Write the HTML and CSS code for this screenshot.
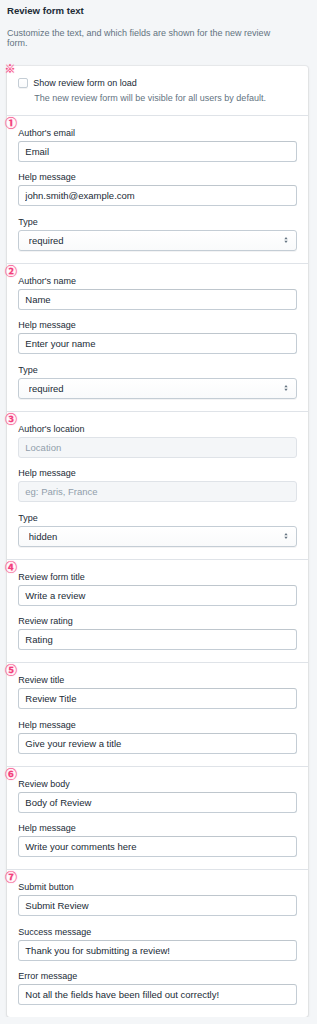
FILE: index.html
```html
<!DOCTYPE html>
<html>
  <head>
    <meta charset="utf-8" />
    <title>Review form text</title>
    <link rel="stylesheet" href="styles.css">
  </head>
  <body>
    <div class="page">
      <h2 class="page-title">Review form text</h2>
      <p class="page-desc">
        Customize the text, and which fields are shown for the new review
        form.
      </p>

      <div class="card">
        <div class="section section-check">
          <span class="mark mark-note">※</span>
          <label class="check-row">
            <span class="checkbox"></span>
            <span>Show review form on load</span>
          </label>
          <p class="check-help">
            The new review form will be visible for all users by default.
          </p>
        </div>

        <div class="section">
          <span class="mark">①</span>
          <div class="field">
            <label class="field-label">Author's email</label>
            <input type="text" class="text-field" value="Email" />
          </div>
          <div class="field">
            <label class="field-label">Help message</label>
            <input type="text" class="text-field" value="john.smith@example.com" />
          </div>
          <div class="field">
            <label class="field-label">Type</label>
            <div class="select">
              <select class="select-input">
                <option selected>required</option>
                <option>optional</option>
                <option>hidden</option>
              </select>
              <svg class="select-arrow" viewBox="0 0 6 10">
                <path d="M3 0.5 L5.5 3.8 H0.5 Z M3 9.5 L0.5 6.2 H5.5 Z" />
              </svg>
            </div>
          </div>
        </div>

        <div class="section">
          <span class="mark">②</span>
          <div class="field">
            <label class="field-label">Author's name</label>
            <input type="text" class="text-field" value="Name" />
          </div>
          <div class="field">
            <label class="field-label">Help message</label>
            <input type="text" class="text-field" value="Enter your name" />
          </div>
          <div class="field">
            <label class="field-label">Type</label>
            <div class="select">
              <select class="select-input">
                <option selected>required</option>
                <option>optional</option>
                <option>hidden</option>
              </select>
              <svg class="select-arrow" viewBox="0 0 6 10">
                <path d="M3 0.5 L5.5 3.8 H0.5 Z M3 9.5 L0.5 6.2 H5.5 Z" />
              </svg>
            </div>
          </div>
        </div>

        <div class="section">
          <span class="mark">③</span>
          <div class="field">
            <label class="field-label">Author's location</label>
            <input type="text" class="text-field" placeholder="Location" disabled />
          </div>
          <div class="field">
            <label class="field-label">Help message</label>
            <input type="text" class="text-field" placeholder="eg: Paris, France" disabled />
          </div>
          <div class="field">
            <label class="field-label">Type</label>
            <div class="select">
              <select class="select-input">
                <option>required</option>
                <option>optional</option>
                <option selected>hidden</option>
              </select>
              <svg class="select-arrow" viewBox="0 0 6 10">
                <path d="M3 0.5 L5.5 3.8 H0.5 Z M3 9.5 L0.5 6.2 H5.5 Z" />
              </svg>
            </div>
          </div>
        </div>

        <div class="section">
          <span class="mark">④</span>
          <div class="field">
            <label class="field-label">Review form title</label>
            <input type="text" class="text-field" value="Write a review" />
          </div>
          <div class="field">
            <label class="field-label">Review rating</label>
            <input type="text" class="text-field" value="Rating" />
          </div>
        </div>

        <div class="section">
          <span class="mark">⑤</span>
          <div class="field">
            <label class="field-label">Review title</label>
            <input type="text" class="text-field" value="Review Title" />
          </div>
          <div class="field">
            <label class="field-label">Help message</label>
            <input type="text" class="text-field" value="Give your review a title" />
          </div>
        </div>

        <div class="section">
          <span class="mark">⑥</span>
          <div class="field">
            <label class="field-label">Review body</label>
            <input type="text" class="text-field" value="Body of Review" />
          </div>
          <div class="field">
            <label class="field-label">Help message</label>
            <input type="text" class="text-field" value="Write your comments here" />
          </div>
        </div>

        <div class="section">
          <span class="mark">⑦</span>
          <div class="field">
            <label class="field-label">Submit button</label>
            <input type="text" class="text-field" value="Submit Review" />
          </div>
          <div class="field">
            <label class="field-label">Success message</label>
            <input type="text" class="text-field" value="Thank you for submitting a review!" />
          </div>
          <div class="field">
            <label class="field-label">Error message</label>
            <input type="text" class="text-field" value="Not all the fields have been filled out correctly!" />
          </div>
        </div>
      </div>
    </div>
  </body>
</html>
```

FILE: styles.css
```css
* {
  margin: 0;
  padding: 0;
  box-sizing: border-box;
}
body {
  font-family: "Liberation Sans", Arial, sans-serif;
  background: #f4f6f8;
  color: #212b36;
}
.page {
  padding: 4px 9px 0 7px;
}
.page-title {
  font-size: 9.6px;
  line-height: 13px;
  font-weight: bold;
  margin-bottom: 10.5px;
}
.page-desc {
  font-size: 9px;
  line-height: 10.7px;
  color: #637381;
  max-width: 280px;
  margin-bottom: 17px;
}
.card {
  background: white;
  border-radius: 3px;
  box-shadow: 0 0 0 1px rgba(63, 63, 68, 0.05), 0 1px 3px 0 rgba(63, 63, 68, 0.15);
}
.section {
  position: relative;
  border-top: 1px solid #dfe3e8;
  padding: 10px 11.3px 12px;
}
.section-check {
  border-top: 0;
  padding-bottom: 10px;
}
/* annotation markers */
.mark {
  position: absolute;
  left: -2px;
  top: 1px;
  font-family: "Noto Sans CJK JP", sans-serif;
  font-size: 12px;
  line-height: 12px;
  font-weight: bold;
  color: #f23d7c;
  text-shadow: 0 0 1px #ff8fb5, 0 0 2px #ffd3e2;
}
.mark-note {
  top: -3.5px;
  left: -2.5px;
  font-size: 11px;
}
.check-row {
  display: flex;
  align-items: center;
  gap: 5px;
  font-size: 9px;
  line-height: 14px;
}
.checkbox {
  width: 10px;
  height: 10px;
  border: 1px solid #c4cdd5;
  border-radius: 2px;
  background: linear-gradient(#fff, #f9fafb);
  box-shadow: 0 1px 0 rgba(22, 29, 37, 0.05);
}
.check-help {
  font-size: 9px;
  line-height: 14px;
  color: #637381;
  margin-top: 1px;
  padding-left: 16px;
}
.field + .field {
  margin-top: 8.5px;
}
.field-label {
  display: block;
  font-size: 9px;
  line-height: 14px;
  margin-bottom: 1px;
}
.text-field {
  display: block;
  width: 100%;
  height: 21px;
  padding: 0 6px;
  font-family: inherit;
  font-size: 9.5px;
  color: #212b36;
  background: white;
  border: 1px solid #c4cdd5;
  border-top-color: #bec6cd;
  border-radius: 3px;
  outline: none;
}
.text-field:disabled {
  background: #f4f6f8;
  border-color: #dfe3e8;
}
.text-field::placeholder {
  color: #919eab;
}
.select {
  position: relative;
}
.select-input {
  display: block;
  width: 100%;
  height: 21px;
  padding: 0 9.5px;
  font-family: inherit;
  font-size: 9.5px;
  color: #212b36;
  appearance: none;
  background: linear-gradient(#fff, #f9fafb);
  border: 1px solid #c4cdd5;
  border-radius: 3px;
  box-shadow: 0 1px 0 rgba(22, 29, 37, 0.05);
  outline: none;
}
.select-arrow {
  position: absolute;
  right: 9px;
  top: 50%;
  width: 4px;
  height: 7px;
  transform: translateY(-50%);
  fill: #637381;
  pointer-events: none;
}
```
